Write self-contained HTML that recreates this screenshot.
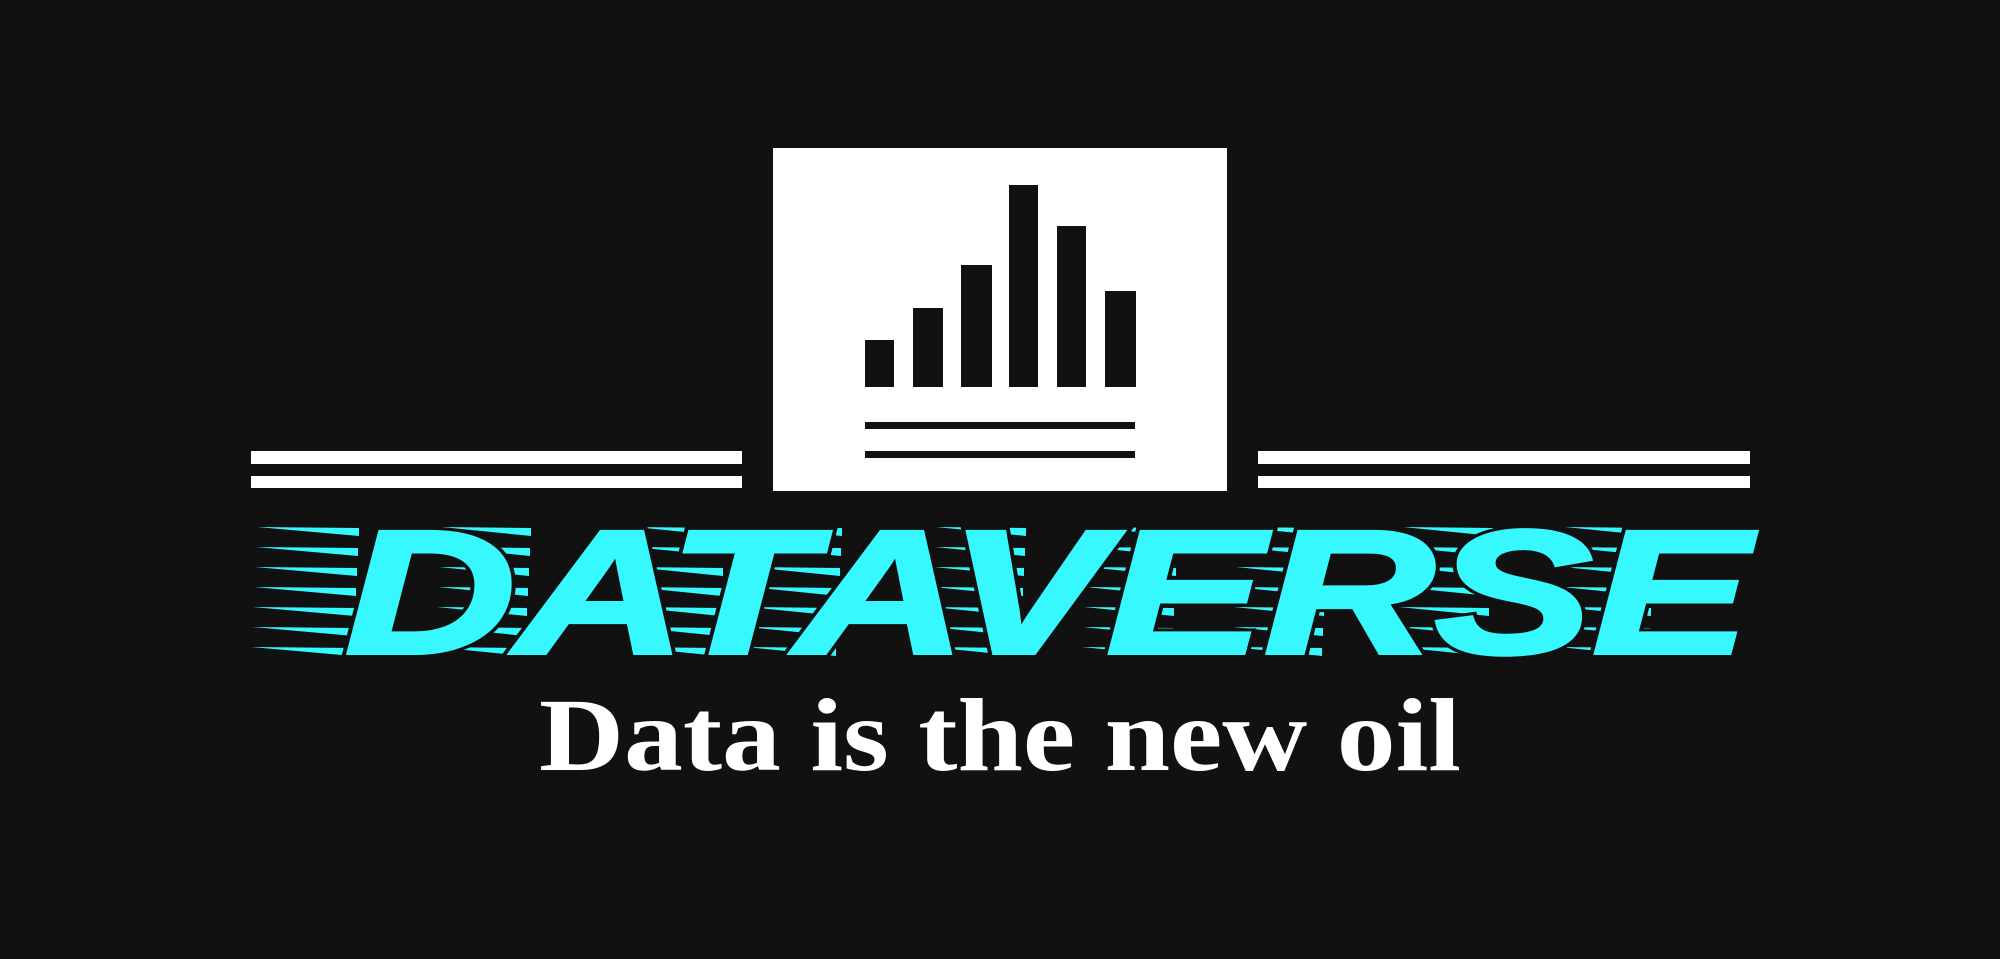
<!DOCTYPE html>
<html><head><meta charset="utf-8"><style>
html,body{margin:0;padding:0;background:#111111;}
svg{display:block}
</style></head><body>
<svg width="2000" height="959" viewBox="0 0 2000 959" xmlns="http://www.w3.org/2000/svg">
<rect width="2000" height="959" fill="#111111"/>
<rect x="773" y="148" width="454" height="343" fill="#ffffff"/>
<g fill="#111111">
<rect x="865" y="340" width="29" height="47"/>
<rect x="913" y="308" width="30" height="79"/>
<rect x="961" y="265" width="31" height="122"/>
<rect x="1009" y="185" width="29" height="202"/>
<rect x="1057" y="226" width="29" height="161"/>
<rect x="1105" y="291" width="31" height="96"/>
<rect x="865" y="422" width="270" height="7"/>
<rect x="865" y="451" width="270" height="7"/>
</g>
<g fill="#ffffff">
<rect x="251" y="451" width="491" height="13"/>
<rect x="251" y="476" width="491" height="12"/>
<rect x="1258" y="451" width="492" height="13"/>
<rect x="1258" y="476" width="492" height="12"/>
</g>
<defs>
<g id="r" fill="#38f8ff">
<polygon points="251,647 353,648 353,656"/>
<polygon points="435,647 525,648 525,656"/>
<polygon points="629,647 719,648 719,656"/>
<polygon points="746,647 836,648 836,656"/>
<polygon points="930,647 1020,648 1020,656"/>
<polygon points="1082,647 1172,648 1172,656"/>
<polygon points="1232,647 1322,648 1322,656"/>
<polygon points="1397,647 1487,648 1487,656"/>
<polygon points="1559,647 1649,648 1649,656"/>
</g>
</defs>
<use href="#r"/>
<use href="#r" transform="translate(1,-20)"/>
<use href="#r" transform="translate(2,-40)"/>
<use href="#r" transform="translate(3,-60)"/>
<use href="#r" transform="translate(4,-80)"/>
<use href="#r" transform="translate(5,-100)"/>
<use href="#r" transform="translate(6,-120)"/>
<text x="345" y="653" font-family="Liberation Sans, sans-serif" font-weight="bold" font-style="italic" font-size="176" fill="#111111" stroke="#111111" stroke-width="10" textLength="1405" lengthAdjust="spacingAndGlyphs">DATAVERSE</text>
<text x="345" y="653" font-family="Liberation Sans, sans-serif" font-weight="bold" font-style="italic" font-size="176" fill="#38f8ff" stroke="#38f8ff" stroke-width="4" textLength="1405" lengthAdjust="spacingAndGlyphs">DATAVERSE</text>
<text x="539" y="770" font-family="Liberation Serif, serif" font-weight="bold" font-size="104" fill="#ffffff" textLength="922" lengthAdjust="spacingAndGlyphs">Data is the new oil</text>
</svg>
</body></html>
